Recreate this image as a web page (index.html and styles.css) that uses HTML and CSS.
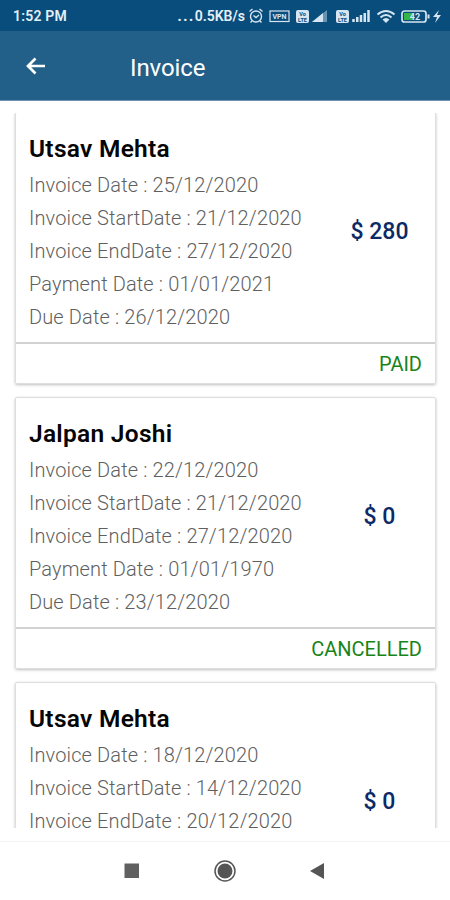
FILE: index.html
```html
<!DOCTYPE html>
<html lang="en">
<head>
<meta charset="utf-8">
<title>Invoice</title>
<link rel="stylesheet" href="styles.css">
</head>
<body>
<div class="status-bar">
  <span class="clock">1:52 PM</span>
  <span class="speed"><span class="dots">...</span>0.5KB/s</span>
  <svg class="status-icons" width="196" height="20" viewBox="0 0 196 20" fill="none" stroke="#d5e5f2" stroke-width="1.4">
    <circle cx="8" cy="10.5" r="5.5"/><path d="M5.5 9.5 8 11.5l3-2.5M1.5 5.5l3-2.5M14.500 5.500l-3-2.500M4 15l-1.500 1.500M12 15l1.500 1.500"/>
    <rect x="22" y="5" width="19" height="10.500" stroke-width="1.200"/>
    <text class="vpn" x="31.500" y="13" textLength="14">VPN</text>
    <rect class="fill" x="48" y="4" width="13" height="13" rx="2"/>
    <text class="lte" x="54.500" y="10">Vo</text><text class="lte" x="54.500" y="15.500">LTE</text>
    <path class="dim" d="M64 16 79 4v12z"/><path class="fill" d="M64 16l11-9v9z"/>
    <rect class="fill" x="88" y="4" width="13" height="13" rx="2"/>
    <text class="lte" x="94.500" y="10">Vo</text><text class="lte" x="94.500" y="15.500">LTE</text>
    <path d="M105.500 16v-3M109.250 16v-5M113 16V9M116.750 16V7M120.500 16V4" stroke-width="2.500"/>
    <path d="M129.500 8.500q8.500-7 17 0M132.500 11.500q5.500-5 11 0" stroke-width="2"/><path class="fill" d="M134.500 13.500q3.500-3 7 0L138 17z"/>
    <rect x="154" y="5" width="24" height="11" rx="2.500" stroke-width="1.700"/>
    <rect class="charge" x="156" y="7" width="9" height="7"/>
    <path d="M180.500 8.500v4" stroke-width="2"/>
    <text class="battery" x="167" y="13.500">42</text>
    <path class="fill" d="M191 4l-6 7h4l-2 6 6-8h-4z"/>
  </svg>
</div>
<header class="app-bar">
  <svg class="back" width="20" height="18" viewBox="0 0 20 18" fill="none" stroke="#fff" stroke-width="2.700"><path d="M19 9H2M9.500 1.500 2 9l7.500 7.500"/></svg>
  <h1>Invoice</h1>
</header>
<main class="list">
  <article class="card">
    <div class="body">
      <div class="details">
        <h2>Utsav Mehta</h2>
        <p>Invoice Date : 25/12/2020</p>
        <p>Invoice StartDate : 21/12/2020</p>
        <p>Invoice EndDate : 27/12/2020</p>
        <p>Payment Date : 01/01/2021</p>
        <p>Due Date : 26/12/2020</p>
      </div>
      <div class="amount">$ 280</div>
    </div>
    <div class="state">PAID</div>
  </article>
  <article class="card">
    <div class="body">
      <div class="details">
        <h2>Jalpan Joshi</h2>
        <p>Invoice Date : 22/12/2020</p>
        <p>Invoice StartDate : 21/12/2020</p>
        <p>Invoice EndDate : 27/12/2020</p>
        <p>Payment Date : 01/01/1970</p>
        <p>Due Date : 23/12/2020</p>
      </div>
      <div class="amount">$ 0</div>
    </div>
    <div class="state">CANCELLED</div>
  </article>
  <article class="card">
    <div class="body">
      <div class="details">
        <h2>Utsav Mehta</h2>
        <p>Invoice Date : 18/12/2020</p>
        <p>Invoice StartDate : 14/12/2020</p>
        <p>Invoice EndDate : 20/12/2020</p>
      </div>
      <div class="amount">$ 0</div>
    </div>
  </article>
</main>
<nav class="nav-bar">
  <svg width="16" height="24" viewBox="0 0 16 24"><rect x=".5" y="4.500" width="14.500" height="14.500" fill="#606060"/></svg>
  <svg width="24" height="24" viewBox="0 0 24 24"><circle cx="12" cy="12" r="10" fill="none" stroke="#555" stroke-width="1.500"/><circle cx="12" cy="12" r="7.500" fill="#555"/></svg>
  <svg width="16" height="24" viewBox="0 0 16 24"><path d="M0 12 14 4v16z" fill="#555"/></svg>
</nav>
</body>
</html>
```
FILE: styles.css
```css
* { box-sizing: border-box; }
body {
  margin: 0;
  width: 450px;
  height: 900px;
  display: flex;
  flex-direction: column;
  overflow: hidden;
  background: #fff;
  font-family: Roboto, sans-serif;
}
h1, h2, p { margin: 0; }
.status-bar {
  flex: none;
  height: 31px;
  display: flex;
  align-items: center;
  padding: 0 6px 0 13px;
  background: #084d7b;
  color: #e6f0f8;
  font-size: 14px;
  font-weight: 600;
}
.clock { letter-spacing: .2px; }
.speed { margin-left: auto; margin-right: 3px; }
.dots { letter-spacing: 1.6px; font-weight: 800; }
.status-icons .fill { fill: #d5e5f2; stroke: none; }
.status-icons .dim { fill: #6993b3; stroke: none; }
.status-icons .charge { fill: #35b44a; stroke: none; }
.status-icons text { stroke: none; text-anchor: middle; font-weight: 700; }
.vpn { font-size: 7px; fill: #d5e5f2; }
.lte { font-size: 5.5px; fill: #084d7b; }
.battery { font-size: 9px; fill: #d5e5f2; }
.app-bar {
  flex: none;
  height: 70px;
  display: flex;
  align-items: center;
  padding: 0 26px;
  background: #225f89;
  border-bottom: 1px solid #6f91b3;
  color: #fff;
}
.app-bar h1 {
  margin-left: 84px;
  padding-top: 4px;
  font-size: 24px;
  font-weight: 400;
  letter-spacing: -.1px;
}
.list {
  flex: none;
  height: 715px;
  margin-top: 12px;
  padding: 0 14px 0 15px;
  overflow: hidden;
}
.card {
  height: 272px;
  margin: 0 0 13px;
  display: flex;
  flex-direction: column;
  border: 1px solid #dedede;
  border-radius: 2px;
  box-shadow: 0 1px 3px rgba(0, 0, 0, .25);
}
.card:first-child { margin-top: -1px; }
.body {
  flex: none;
  height: 231px;
  display: flex;
  border-bottom: 2px solid #d2d2d2;
}
.details { width: 308px; padding: 17px 0 0 13px; white-space: nowrap; }
.details h2 {
  padding-bottom: 1px;
  font-size: 24.5px;
  font-weight: 600;
  line-height: 38px;
  letter-spacing: .28px;
  color: #050505;
}
.details p {
  font-size: 20px;
  font-weight: 300;
  line-height: 33px;
  letter-spacing: .13px;
  color: #5f5f5f;
}
.amount {
  width: 111px;
  padding-top: 102px;
  font-size: 23px;
  font-weight: 500;
  line-height: 33px;
  text-align: center;
  color: #0b2a66;
}
.state {
  padding-right: 13px;
  font-size: 20px;
  line-height: 41px;
  text-align: right;
  color: #188418;
}
.nav-bar {
  flex: none;
  height: 59px;
  margin-top: 13px;
  display: flex;
  justify-content: center;
  align-items: center;
  gap: 73px;
  border-top: 1px solid #f3f3f3;
}
```
